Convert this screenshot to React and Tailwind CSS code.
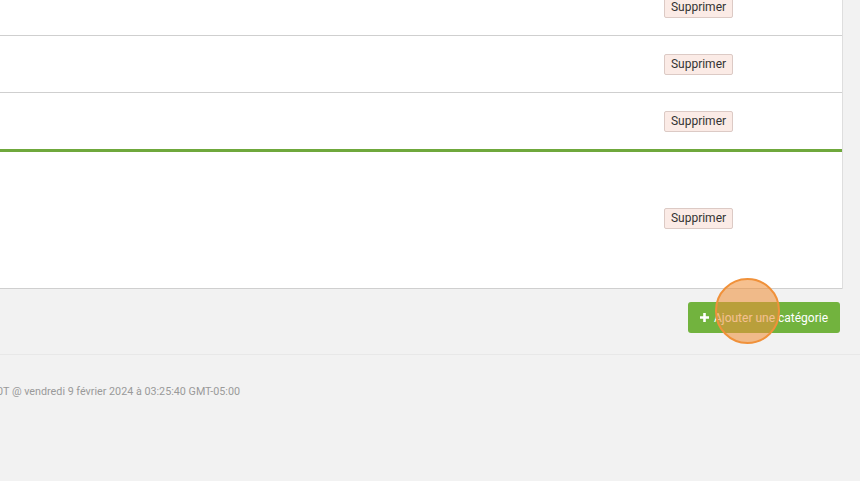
import React from 'react';

const rows = [
  { id: 1, h: 'h-[57px] pb-[2px]', border: 'border-b border-[#cfcfcf]' },
  { id: 2, h: 'h-[57px] pb-[2px]', border: 'border-b border-[#cfcfcf]' },
  { id: 3, h: 'h-[59px] pb-[2px]', border: 'border-b-[3px] border-[#6fa83c]' },
  { id: 4, h: 'h-[137px] pb-[6px]', border: 'border-b border-[#cfcfcf]' },
];

function DeleteButton() {
  return (
    <button
      type="button"
      className="h-[21px] w-[69px] rounded-[2px] border border-[#dccac5] bg-[#fbebe6] text-[12px] leading-none text-[#333]"
    >
      Supprimer
    </button>
  );
}

export default function App() {
  return (
    <div
      className="relative h-[481px] w-[860px] overflow-hidden bg-[#f2f2f2]"
      style={{ fontFamily: 'Roboto, "Liberation Sans", sans-serif' }}
    >
      {/* Category table */}
      <div className="-mt-[21px] w-[843px] border-r border-[#dedede] bg-white">
        {rows.map((row) => (
          <div key={row.id} className={`flex items-center ${row.h} ${row.border}`}>
            <div className="flex-1" />
            <div className="w-[178px]">
              <DeleteButton />
            </div>
          </div>
        ))}
      </div>

      {/* Add button */}
      <div className="flex justify-end pr-[20px] pt-[13px]">
        <button
          type="button"
          className="flex h-[31px] w-[152px] items-center justify-center gap-[5px] rounded-[3px] bg-[#72b33e] text-[12px] text-white"
        >
          <svg width="9" height="9" viewBox="0 0 9 9">
            <path d="M3.2 0h2.6v3.2H9v2.6H5.8V9H3.2V5.8H0V3.2h3.2z" fill="white" />
          </svg>
          Ajouter une catégorie
        </button>
      </div>

      {/* Footer */}
      <div className="mt-[21px] border-t border-[#e8e8e8] pt-[29px]">
        <p className="-ml-[3px] whitespace-nowrap text-[10.75px] text-[#9a9a9a]">
          0T @ vendredi 9 février 2024 à 03:25:40 GMT-05:00
        </p>
      </div>

      {/* Click highlight */}
      <div className="absolute left-[715px] top-[278px] h-[66px] w-[65px] rounded-full border-[2.5px] border-[#f0913a] bg-[rgba(240,145,58,0.57)]" />
    </div>
  );
}
